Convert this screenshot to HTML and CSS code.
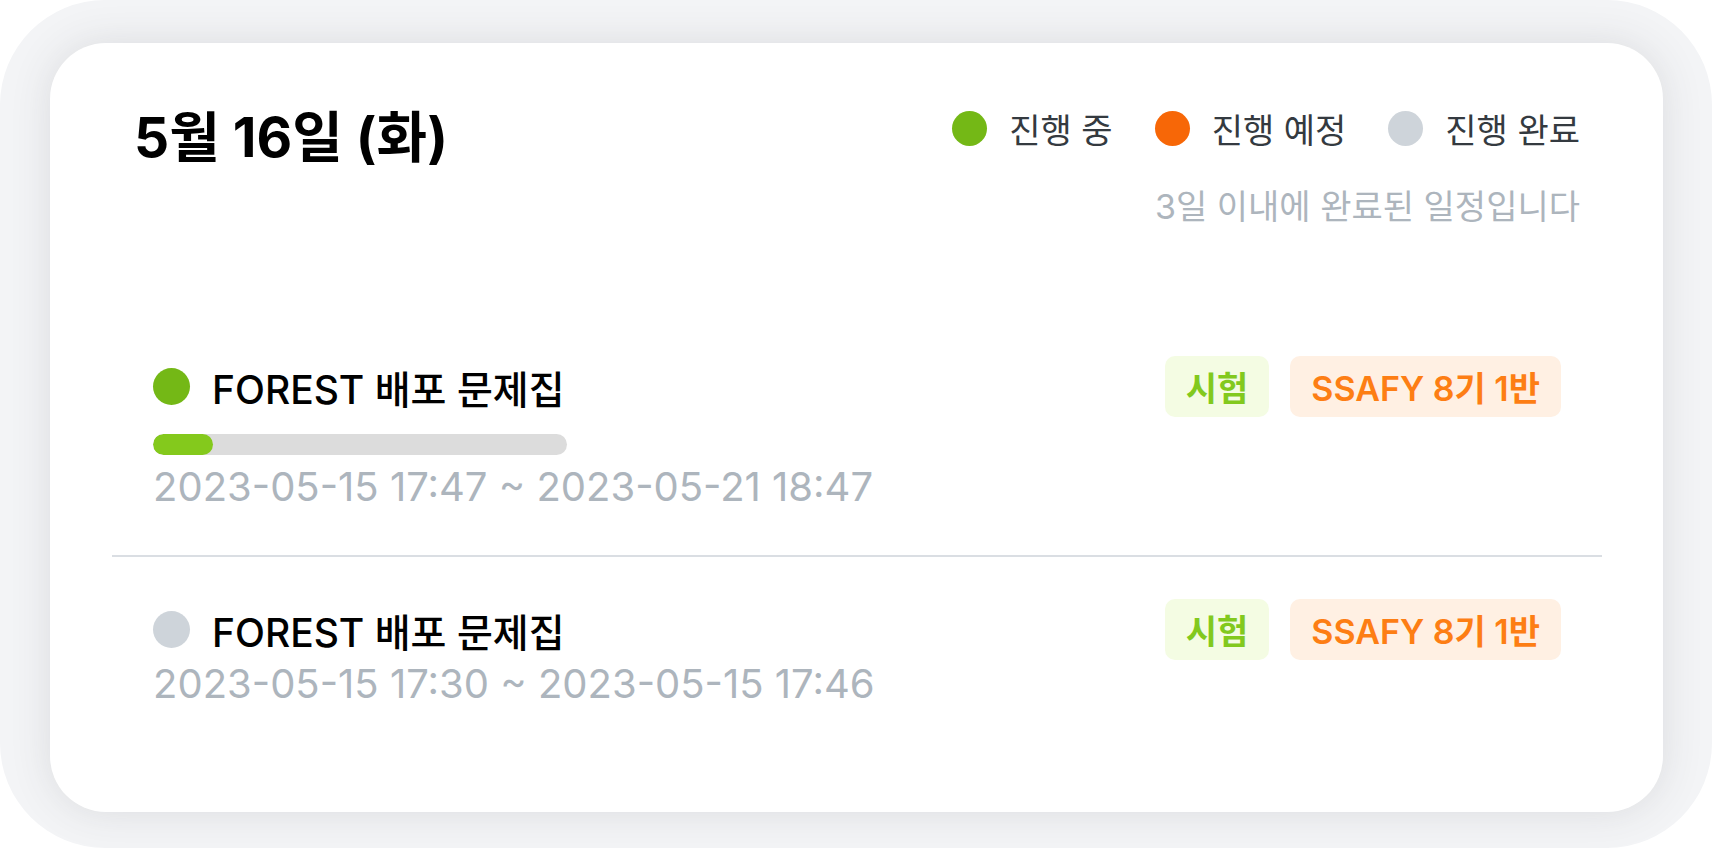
FILE: index.html
```html
<!DOCTYPE html>
<html lang="ko">
<head>
<meta charset="utf-8">
<title>일정</title>
<link rel="stylesheet" href="styles.css">
</head>
<body>
<div class="frame">
  <section class="card">
    <header class="head">
      <h1 class="date-title">5월 16일 (화)</h1>
      <div class="head-right">
        <ul class="legend">
          <li class="legend-item"><span class="dot dot-green"></span>진행 중</li>
          <li class="legend-item"><span class="dot dot-orange"></span>진행 예정</li>
          <li class="legend-item"><span class="dot dot-gray"></span>진행 완료</li>
        </ul>
        <p class="note">3일 이내에 완료된 일정입니다</p>
      </div>
    </header>
    <ul class="list">
      <li class="row">
        <div class="row-top">
          <div class="row-name"><span class="dot dot-green big"></span><span class="name">FOREST 배포 문제집</span></div>
          <div class="tags"><span class="tag tag-green">시험</span><span class="tag tag-orange">SSAFY 8기 1반</span></div>
        </div>
        <div class="bar"><div class="bar-fill" style="width:14.5%"></div></div>
        <div class="period">2023-05-15 17:47 ~ 2023-05-21 18:47</div>
      </li>
      <li class="row">
        <div class="row-top">
          <div class="row-name"><span class="dot dot-gray big"></span><span class="name">FOREST 배포 문제집</span></div>
          <div class="tags"><span class="tag tag-green">시험</span><span class="tag tag-orange">SSAFY 8기 1반</span></div>
        </div>
        <div class="period">2023-05-15 17:30 ~ 2023-05-15 17:46</div>
      </li>
    </ul>
  </section>
</div>
</body>
</html>
```
FILE: styles.css
```css
* { box-sizing: border-box; }
html, body { margin: 0; padding: 0; background: #ffffff; }
body {
  font-family: Inter, "Noto Sans CJK KR", sans-serif;
  color: #000;
}
.frame {
  width: 1712px;
  height: 848px;
  border-radius: 105px;
  background: #f3f4f6;
  padding: 43px 49px 36px 50px;
}
.card {
  height: 100%;
  background: #ffffff;
  border-radius: 56px;
  box-shadow: 0 0 40px rgba(60, 64, 72, 0.13);
  padding: 62px 0 0 0;
}
.head {
  display: flex;
  justify-content: space-between;
  align-items: flex-start;
  padding: 0 83px 0 84px;
}
.date-title {
  margin: 0;
  font-size: 55px;
  line-height: 64px;
  font-weight: 700;
}
.head-right {
  display: flex;
  flex-direction: column;
  align-items: flex-end;
  padding-top: 3px;
}
.legend {
  list-style: none;
  margin: 0;
  padding: 0;
  display: flex;
  gap: 42px;
  height: 40px;
  align-items: center;
}
.legend-item {
  display: flex;
  align-items: center;
  gap: 22px;
  font-size: 34px;
  color: #343a40;
}
.dot {
  display: inline-block;
  width: 35px;
  height: 35px;
  border-radius: 50%;
  flex: none;
}
.dot.big { width: 37px; height: 37px; }
.dot-green { background: #74b816; }
.dot-orange { background: #f76707; }
.dot-gray { background: #ced4da; }
.note {
  margin: 39px 0 0 0;
  font-size: 34px;
  line-height: 40px;
  color: #adb5bd;
}
.list {
  list-style: none;
  margin: 85px 61px 0 62px;
  padding: 0;
}
.row {
  padding: 44px 41px;
}
.row + .row {
  border-top: 2px solid #dadee3;
  padding-top: 42px;
}
.row-top {
  display: flex;
  justify-content: space-between;
  align-items: center;
}
.row-name {
  display: flex;
  align-items: center;
  gap: 22px;
}
.name {
  font-size: 39px;
  font-weight: 500;
}
.tags {
  display: flex;
  gap: 21px;
}
.tag {
  display: inline-flex;
  align-items: center;
  height: 61px;
  padding: 0 21px;
  border-radius: 10px;
  font-size: 34px;
  font-weight: 600;
}
.tag-green { background: #f4fce3; color: #82c91e; }
.tag-orange { background: #fff0e3; color: #fd7e14; }
.bar {
  width: 414px;
  height: 21px;
  margin: 17px 0 8px;
  border-radius: 11px;
  background: #dcdcdc;
  overflow: hidden;
}
.bar-fill {
  height: 100%;
  border-radius: 11px;
  background: #84c91c;
}
.period {
  font-size: 40px;
  line-height: 48px;
  color: #adb5bd;
}
```
